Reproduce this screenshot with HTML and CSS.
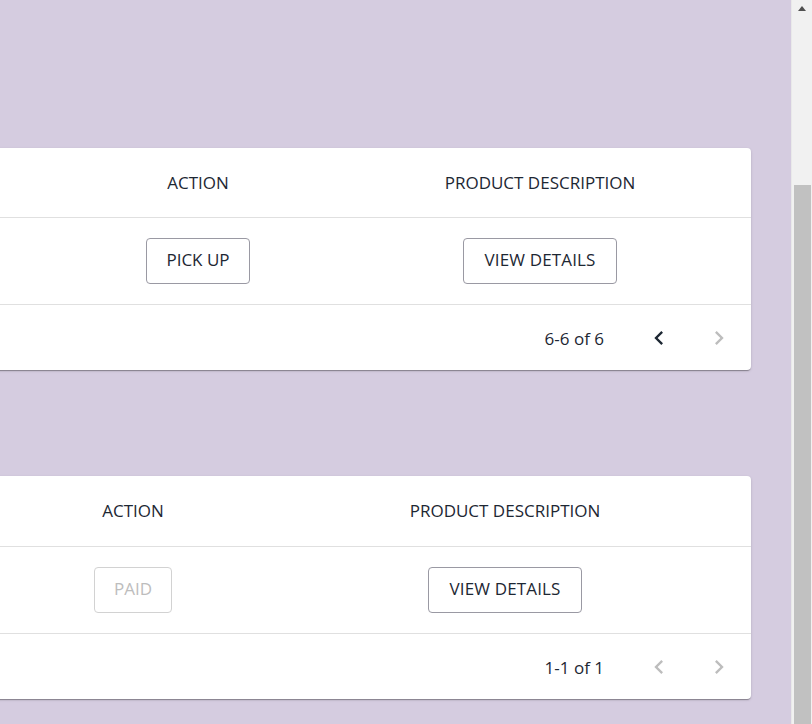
FILE: index.html
```html
<!DOCTYPE html>
<html lang="en">
<head>
<meta charset="utf-8">
<title>Orders</title>
<link rel="stylesheet" href="styles.css">
</head>
<body>
<div class="window">
  <main class="page">
    <section class="card">
      <div class="row head cols-a">
        <div class="cell"></div>
        <div class="cell">ACTION</div>
        <div class="cell">PRODUCT DESCRIPTION</div>
      </div>
      <div class="row body cols-a">
        <div class="cell"></div>
        <div class="cell"><button class="btn">PICK UP</button></div>
        <div class="cell"><button class="btn wide">VIEW DETAILS</button></div>
      </div>
      <div class="foot">
        <span class="range">6-6 of 6</span>
        <button class="nav">
          <svg viewBox="0 0 24 24" width="28" height="28"><path d="M15.41 16.59L10.83 12l4.58-4.59L14 6l-6 6 6 6 1.41-1.41z"/></svg>
        </button>
        <button class="nav off">
          <svg viewBox="0 0 24 24" width="28" height="28"><path d="M8.59 16.59L13.17 12 8.59 7.41 10 6l6 6-6 6-1.41-1.41z"/></svg>
        </button>
      </div>
    </section>

    <section class="card">
      <div class="row head tall cols-b">
        <div class="cell"></div>
        <div class="cell">ACTION</div>
        <div class="cell">PRODUCT DESCRIPTION</div>
      </div>
      <div class="row body cols-b">
        <div class="cell"></div>
        <div class="cell"><button class="btn disabled" disabled>PAID</button></div>
        <div class="cell"><button class="btn wide">VIEW DETAILS</button></div>
      </div>
      <div class="foot">
        <span class="range">1-1 of 1</span>
        <button class="nav off">
          <svg viewBox="0 0 24 24" width="28" height="28"><path d="M15.41 16.59L10.83 12l4.58-4.59L14 6l-6 6 6 6 1.41-1.41z"/></svg>
        </button>
        <button class="nav off">
          <svg viewBox="0 0 24 24" width="28" height="28"><path d="M8.59 16.59L13.17 12 8.59 7.41 10 6l6 6-6 6-1.41-1.41z"/></svg>
        </button>
      </div>
    </section>
  </main>
  <div class="scrollbar">
    <div class="arrow"></div>
    <div class="thumb"></div>
  </div>
</div>
</body>
</html>
```

FILE: styles.css
```css
* { box-sizing: border-box; }
html, body {
  margin: 0;
  height: 100%;
  overflow: hidden;
}
body {
  font-family: "Open Sans", "Noto Sans", sans-serif;
  color: #1d2733;
}
.window {
  display: flex;
  height: 724px;
}
.page {
  flex: 1;
  background: #d5cce0;
  overflow: hidden;
  display: flex;
  flex-direction: column;
  align-items: flex-end;
  padding: 148px 40px 0 0;
  gap: 106px;
}
.card {
  flex: none;
  width: 1000px;
  background: #fff;
  border-radius: 4px;
  box-shadow: 0 2px 1px -1px rgba(0,0,0,0.2), 0 1px 1px 0 rgba(0,0,0,0.14), 0 1px 3px 0 rgba(0,0,0,0.12);
}
.row {
  display: grid;
  border-bottom: 1px solid #e0e0e0;
}
.cols-a { grid-template-columns: 1fr 262px 422px; }
.cols-b { grid-template-columns: 1fr 252px 492px; }
.head { height: 70px; }
.head.tall { height: 71px; }
.body { height: 87px; }
.cell {
  display: flex;
  align-items: center;
  justify-content: center;
  font-size: 17px;
  font-weight: 500;
  line-height: 1;
}
.head .cell { padding-bottom: 1px; }
.btn {
  height: 46px;
  padding: 0 19px 3px;
  background: #fff;
  border: 1px solid #9a99a3;
  border-radius: 4px;
  font-family: inherit;
  font-size: 17px;
  font-weight: 500;
  color: #1d2733;
  line-height: 1;
}
.btn.wide { padding: 0 20px 3px; letter-spacing: 0.15px; }
.btn.disabled {
  border-color: #d2d2d2;
  color: #bdbdbd;
}
.foot {
  height: 65px;
  display: flex;
  align-items: center;
  justify-content: flex-end;
  padding-right: 8px;
}
.range {
  font-size: 17px;
  margin-right: 31px;
  padding-top: 1px;
}
.nav {
  width: 48px;
  height: 48px;
  border: 0;
  padding: 0;
  background: none;
  display: flex;
  align-items: center;
  justify-content: center;
  fill: #1d2733;
}
.nav + .nav { margin-left: 12px; }
.nav.off { fill: #bdbdbd; }
.scrollbar {
  width: 21px;
  flex: none;
  background: #f1f1f1;
  display: flex;
  flex-direction: column;
  align-items: center;
  border-left: 1px solid #e9e9e9;
}
.arrow {
  margin-top: 6px;
  width: 0;
  height: 0;
  border-left: 4.5px solid transparent;
  border-right: 4.5px solid transparent;
  border-bottom: 5px solid #505050;
}
.thumb {
  margin-top: 174px;
  width: 17px;
  flex: 1;
  background: #c1c1c1;
}
```
